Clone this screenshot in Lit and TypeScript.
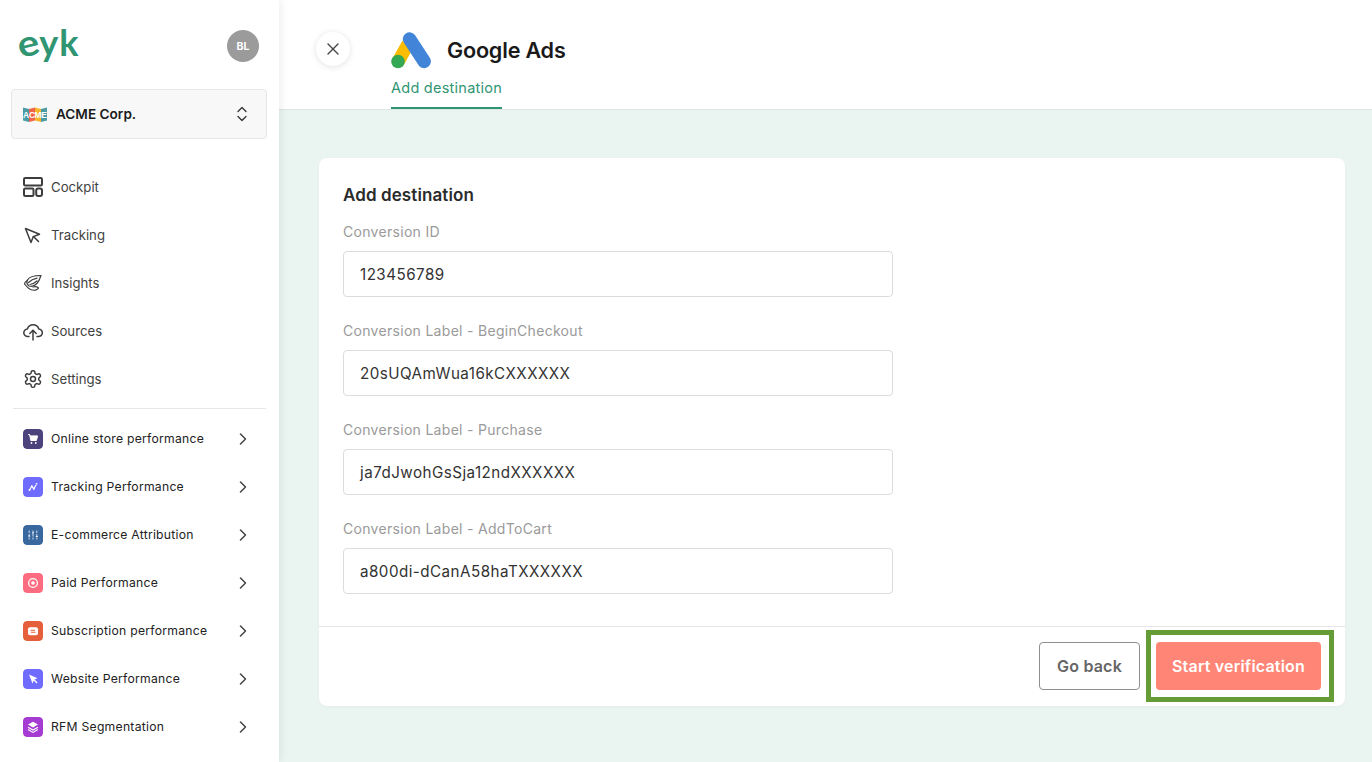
import { LitElement, html, css, svg } from "lit";
import { customElement } from "lit/decorators.js";

const stroke = (inner: unknown, w = 1.6) => html`<svg class="nav-icon" viewBox="0 0 20 20" fill="none" stroke="#3d3d3d" stroke-width=${w} stroke-linecap="round" stroke-linejoin="round">${inner}</svg>`;

const navItems = [
  { label: "Cockpit", icon: stroke(svg`<rect x="1" y="1" width="18" height="7.5" rx="1.2"/><rect x="1" y="11.5" width="9.5" height="7.5" rx="1.2"/><rect x="13.2" y="11.5" width="5.8" height="7.5" rx="2"/>`, 2) },
  { label: "Tracking", icon: stroke(svg`<path d="M2.5 3.5 L8 17.5 L10.3 11.6 L16.5 9.2 Z"/><path d="M10.5 11.5 L15.5 16.5"/>`, 1.5) },
  { label: "Insights", icon: stroke(svg`<path d="M18 2.5 C12 2.5 6.5 3 4.5 7 C3.5 9 4 11.5 6 13 C10 14 15 12 18 2.5 Z"/><path d="M5.5 9.5 C8 7 11 5.8 14 5.2"/><path d="M7 11.5 C10 11 12 9.8 14 8"/><path d="M4.2 7.5 C2.2 8.8 1.5 10 1.5 11 C3 13 4.5 15 7.5 16.5 C11 18 14.5 17 15.5 15 C14 13.6 12 13.5 10 14"/>`, 1.2) },
  { label: "Sources", icon: stroke(svg`<path d="M6 15.5 H4.8 A3.8 3.8 0 0 1 4.4 7.9 A6 6 0 0 1 15.8 7.9 A3.8 3.8 0 0 1 15.2 15.5 H14"/><path d="M10 19 V9.5"/><path d="M6.8 12.5 L10 9.3 L13.2 12.5"/>`, 1.5) },
  { label: "Settings", icon: html`<svg class="nav-icon" viewBox="0 0 24 24" fill="none" stroke="#3d3d3d" stroke-width="1.8" stroke-linecap="round" stroke-linejoin="round"><path d="M12.22 2h-.44a2 2 0 0 0-2 2v.18a2 2 0 0 1-1 1.73l-.43.25a2 2 0 0 1-2 0l-.15-.08a2 2 0 0 0-2.73.73l-.22.38a2 2 0 0 0 .73 2.73l.15.1a2 2 0 0 1 1 1.72v.51a2 2 0 0 1-1 1.74l-.15.09a2 2 0 0 0-.73 2.73l.22.38a2 2 0 0 0 2.73.73l.15-.08a2 2 0 0 1 2 0l.43.25a2 2 0 0 1 1 1.73V20a2 2 0 0 0 2 2h.44a2 2 0 0 0 2-2v-.18a2 2 0 0 1 1-1.73l.43-.25a2 2 0 0 1 2 0l.15.08a2 2 0 0 0 2.73-.73l.22-.39a2 2 0 0 0-.73-2.73l-.15-.08a2 2 0 0 1-1-1.74v-.5a2 2 0 0 1 1-1.74l.15-.09a2 2 0 0 0 .73-2.73l-.22-.38a2 2 0 0 0-2.73-.73l-.15.08a2 2 0 0 1-2 0l-.43-.25a2 2 0 0 1-1-1.73V4a2 2 0 0 0-2-2z"/><circle cx="12" cy="12" r="3"/></svg>` },
];

const reports = [
  { label: "Online store performance", color: "#4c437c", glyph: svg`<path d="M5.2 5.5h1.4l1.2 6h5.6l1.2-4.6H7" fill="#fff" stroke="#fff" stroke-width="1"/><circle cx="8.5" cy="14" r=".9" fill="#fff"/><circle cx="12.8" cy="14" r=".9" fill="#fff"/>` },
  { label: "Tracking Performance", color: "#6f6bff", glyph: svg`<path d="M6.5 13 L8.8 9.2 L10.8 11.8 L13 8" fill="none" stroke="#fff" stroke-width="1.2"/><circle cx="6.5" cy="13" r="1" fill="#fff"/><circle cx="8.8" cy="9.2" r="1" fill="#fff"/><circle cx="10.8" cy="11.8" r="1" fill="#fff"/><circle cx="13.6" cy="6.8" r=".9" fill="#fff"/>` },
  { label: "E-commerce Attribution", color: "#38689e", glyph: svg`<path d="M6.2 5.5v9M10 5.5v9M13.8 5.5v9" stroke="#dfe8f2" stroke-width=".9" stroke-dasharray="2.5 1"/><path d="M5.2 11h2M9 8h2M12.8 11.5h2" stroke="#fff" stroke-width="1.1"/>` },
  { label: "Paid Performance", color: "#ff6b81", glyph: svg`<circle cx="10" cy="10" r="4.4" fill="none" stroke="#fff" stroke-width="1.3"/><circle cx="10" cy="10" r="1.8" fill="#fff"/>` },
  { label: "Subscription performance", color: "#e5603a", glyph: svg`<rect x="5" y="6.2" width="10" height="8" rx="2" fill="#fff"/><path d="M7.5 9.2h4.5M12.5 11.2H8" stroke="#e5603a" stroke-width="1.1"/>` },
  { label: "Website Performance", color: "#6f6bff", glyph: svg`<path d="M6 5.5 L14.5 9.2 L11 10.8 L9.5 14.5 Z" fill="#fff"/><path d="M11 10.8 L14 14" stroke="#fff" stroke-width="1.3"/>` },
  { label: "RFM Segmentation", color: "#a63bd4", glyph: svg`<path d="M10 4.8 L15 7.6 L10 10.4 L5 7.6 Z" fill="#fff"/><path d="M5 10.2 L10 13 L15 10.2M5 12.6 L10 15.4 L15 12.6" fill="none" stroke="#fff" stroke-width="1.1"/>` },
];

const fields = [
  { label: "Conversion ID", value: "123456789" },
  { label: "Conversion Label - BeginCheckout", value: "20sUQAmWua16kCXXXXXX" },
  { label: "Conversion Label - Purchase", value: "ja7dJwohGsSja12ndXXXXXX" },
  { label: "Conversion Label - AddToCart", value: "a800di-dCanA58haTXXXXXX" },
];

@customElement("app-root")
export class AppRoot extends LitElement {
  static styles = css`
    :host { display: block; height: 100vh; overflow: hidden; font-family: Inter, "Open Sans", sans-serif; color: #222; }
    * { box-sizing: border-box; }
    .page { display: flex; height: 762px; background: #eaf4f0; }

    .sidebar { width: 279px; flex: none; background: #fff; box-shadow: 2px 0 8px rgba(0,0,0,.07); padding: 30px 12px 0 11px; position: relative; z-index: 2; overflow: hidden; }
    .brand { display: flex; justify-content: space-between; align-items: flex-start; height: 59px; padding: 0 8px 0 6px; }
    .logo { font-family: Lato, sans-serif; font-weight: 700; font-size: 36px; line-height: 24px; height: 30px; color: #2f9573; letter-spacing: 1px; display: block; }
    .logo-e { display: inline-block; transform: rotate(-14deg) scaleX(1.12); margin: 0 1px; }
    .avatar { width: 32px; height: 32px; border-radius: 50%; background: #9b9b9b; color: #fff; font-size: 10.5px; font-weight: 700; display: flex; align-items: center; justify-content: center; }
    .org { height: 50px; border: 1px solid #e6e6e6; border-radius: 4px; background: #f8f8f8; display: flex; align-items: center; padding: 0 18px 0 11px; }
    .acme { width: 24px; height: 15px; flex: none; margin-right: 9px; }
    .org-name { flex: 1; font-size: 13.6px; font-weight: 600; color: #1b1b1b; }
    .updown { width: 12px; height: 16px; }

    .nav { margin-top: 24px; padding-bottom: 5px; border-bottom: 1px solid #e6e6e6; margin-left: 2px; margin-right: 1px; }
    .nav-row { height: 48px; display: flex; align-items: center; padding-left: 10px; gap: 8px; font-size: 13.2px; color: #3f3f3f; }
    .nav-icon { width: 20px; height: 20px; flex: none; }
    .reports { margin-top: 6px; margin-left: 2px; }
    .report-row { height: 48px; display: flex; align-items: center; padding-left: 10px; gap: 8px; font-size: 12.2px; letter-spacing: .25px; color: #222; }
    .badge { width: 20px; height: 20px; border-radius: 4px; flex: none; display: block; }
    .report-label { flex: 1; white-space: nowrap; line-height: 16px; padding-bottom: 1px; }
    .chev { width: 8px; height: 12px; flex: none; margin-right: 20px; }

    .main { flex: 1; min-width: 0; display: flex; flex-direction: column; }
    .header { height: 110px; flex: none; background: #fff; border-bottom: 1px solid #dfe5e2; display: flex; padding-left: 37px; }
    .close { width: 34px; height: 34px; margin-top: 32px; border: 0; padding: 0; border-radius: 50%; background: #fff; box-shadow: 0 1px 6px rgba(0,0,0,.12); display: flex; align-items: center; justify-content: center; flex: none; }
    .close svg { width: 14px; height: 14px; }
    .head-col { margin-left: 41px; display: flex; flex-direction: column; }
    .title-row { display: flex; align-items: center; gap: 16px; height: 76px; padding-top: 24px; }
    .gads { width: 40px; height: 38px; flex: none; }
    .title { font-size: 21.6px; font-weight: 600; color: #1a1a1a; letter-spacing: -0.2px; }
    .tab { font-size: 14.5px; letter-spacing: .25px; color: #2f9573; height: 33px; border-bottom: 2px solid #2f9573; padding-top: 3px; align-self: flex-start; line-height: 18px; }

    .content { flex: 1; padding: 48px 27px 56px 40px; }
    .card { background: #fff; border-radius: 8px; height: 548px; box-shadow: 0 1px 3px rgba(0,0,0,.04); display: flex; flex-direction: column; }
    .card-body { flex: 1; padding: 27px 24px 0; }
    .card-title { font-size: 17px; letter-spacing: .1px; font-weight: 600; color: #2b2b2b; line-height: 20px; margin-bottom: 17px; }
    .field { height: 99px; width: 550px; }
    .field-label { font-size: 14px; letter-spacing: .3px; color: #9a9a9a; line-height: 20px; height: 29px; display: block; }
    .input { height: 46px; border: 1px solid #dcdcdc; border-radius: 4px; padding: 0 16px; display: flex; align-items: center; font-size: 15.2px; letter-spacing: .46px; color: #333; background: #fff; }
    .footer { height: 80px; border-top: 1px solid #e6e6e6; display: flex; justify-content: flex-end; align-items: flex-start; padding: 15px 24px 0 0; gap: 16px; }
    .btn { height: 48px; border-radius: 4px; font: inherit; font-size: 16px; letter-spacing: .2px; font-weight: 600; display: flex; align-items: center; justify-content: center; }
    .back { width: 101px; background: #fff; border: 1px solid #8f8f8f; color: #666; }
    .start { width: 165px; background: #ff8576; border: 0; color: #fff; }
    .hl { position: relative; }
    .hl-box { position: absolute; left: -10px; top: -12px; right: -13px; bottom: -12px; border: 5px solid #669c35; pointer-events: none; }
  `;

  render() {
    return html`
      <div class="page">
        <aside class="sidebar">
          <div class="brand">
            <span class="logo"><span class="logo-e">e</span>yk</span>
            <div class="avatar">BL</div>
          </div>
          <div class="org">
            <svg class="acme" viewBox="0 0 24 15">
              <polygon points="0,0.5 6,2 6,15 0,13.5" fill="#4a9ba6"/>
              <polygon points="6,2 12,0.5 12,13.5 6,15" fill="#f0654a"/>
              <polygon points="12,0.5 18,2 18,15 12,13.5" fill="#f7b52c"/>
              <polygon points="18,2 24,0.5 24,13.5 18,15" fill="#4a9ba6"/>
              <g fill="#fff" font-size="8.5" font-weight="700" font-family="Liberation Sans Narrow, Liberation Sans, sans-serif" text-anchor="middle">
                <text x="3" y="11">A</text><text x="9" y="11">C</text><text x="15" y="11">M</text><text x="21" y="11">E</text>
              </g>
            </svg>
            <span class="org-name">ACME Corp.</span>
            <svg class="updown" viewBox="0 0 12 16" fill="none" stroke="#333" stroke-width="1.3" stroke-linecap="round" stroke-linejoin="round"><path d="M2 5.5 L6 1.5 L10 5.5"/><path d="M2 10.5 L6 14.5 L10 10.5"/></svg>
          </div>
          <nav class="nav">
            ${navItems.map((n) => html`<div class="nav-row">${n.icon}<span>${n.label}</span></div>`)}
          </nav>
          <div class="reports">
            ${reports.map((r) => html`
              <div class="report-row">
                <svg class="badge" viewBox="0 0 20 20"><rect width="20" height="20" rx="4" fill=${r.color}/>${r.glyph}</svg>
                <span class="report-label">${r.label}</span>
                <svg class="chev" viewBox="0 0 8 12" fill="none" stroke="#444" stroke-width="1.5" stroke-linecap="round" stroke-linejoin="round"><path d="M1.5 1 L6.5 6 L1.5 11"/></svg>
              </div>`)}
          </div>
        </aside>
        <main class="main">
          <header class="header">
            <button class="close" aria-label="Close">
              <svg viewBox="0 0 14 14" fill="none" stroke="#444" stroke-width="1.4" stroke-linecap="round"><path d="M2 2 L12 12M12 2 L2 12"/></svg>
            </button>
            <div class="head-col">
              <div class="title-row">
                <svg class="gads" viewBox="0 0 40 38">
                  <line x1="7" y1="31" x2="17" y2="13" stroke="#fbbc04" stroke-width="13"/>
                  <line x1="18.5" y1="8" x2="33.2" y2="30.5" stroke="#4285d8" stroke-width="13.4" stroke-linecap="round"/>
                  <circle cx="7" cy="30.5" r="6.8" fill="#34a853"/>
                </svg>
                <span class="title">Google Ads</span>
              </div>
              <div class="tab">Add destination</div>
            </div>
          </header>
          <section class="content">
            <div class="card">
              <div class="card-body">
                <div class="card-title">Add destination</div>
                ${fields.map((f) => html`
                  <div class="field">
                    <span class="field-label">${f.label}</span>
                    <div class="input">${f.value}</div>
                  </div>`)}
              </div>
              <div class="footer">
                <button class="btn back">Go back</button>
                <div class="hl">
                  <button class="btn start">Start verification</button>
                  <span class="hl-box"></span>
                </div>
              </div>
            </div>
          </section>
        </main>
      </div>
    `;
  }
}
